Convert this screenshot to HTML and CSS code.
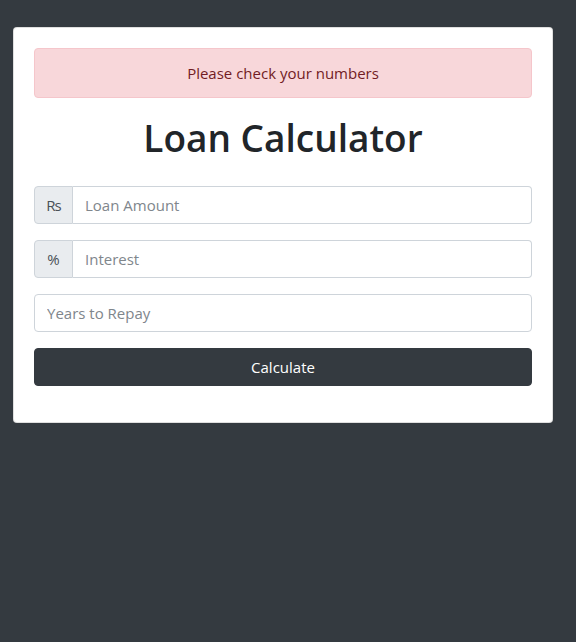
FILE: index.html
```html
<!DOCTYPE html>
<html lang="en">
<head>
<meta charset="utf-8">
<title>Loan Calculator</title>
<link rel="stylesheet" href="styles.css">
</head>
<body>
<div class="wrap">
  <div class="card">
    <div class="alert">Please check your numbers</div>
    <h1 class="title">Loan Calculator</h1>
    <form class="form" onsubmit="return false">
      <div class="group input-group">
        <span class="addon addon-rs">Rs</span>
        <input class="field" type="number" placeholder="Loan Amount">
      </div>
      <div class="group input-group">
        <span class="addon">%</span>
        <input class="field" type="number" placeholder="Interest">
      </div>
      <div class="group">
        <input class="field solo" type="number" placeholder="Years to Repay">
      </div>
      <div class="group">
        <button class="btn" type="submit">Calculate</button>
      </div>
    </form>
  </div>
</div>
</body>
</html>
```
FILE: styles.css
```css
* { box-sizing: border-box; }
html, body {
  margin: 0;
  padding: 0;
  background: #343a40;
  min-height: 100%;
}
body {
  font-family: "Open Sans", "Noto Sans", sans-serif;
  font-size: 16px;
  line-height: 1.5;
  color: #212529;
}
.wrap {
  padding: 27px 23px 0 13px;
}
.card {
  width: 540px;
  background: #fff;
  border: 1px solid rgba(0,0,0,.125);
  border-radius: 4px;
  padding: 20px;
}
.alert {
  background: #f8d7da;
  border: 1px solid #f5c6cb;
  color: #721c24;
  border-radius: 4px;
  padding: 12px 20px;
  text-align: center;
  margin-bottom: 16px;
  font-size: 15px;
  line-height: 24px;
}
.title {
  margin: 0 0 24px;
  font-size: 37px;
  font-weight: 600;
  line-height: 48px;
  text-align: center;
  color: #212529;
}
.form { margin: 0; }
.group { margin-bottom: 16px; }
.input-group { display: flex; }
.addon {
  display: flex;
  align-items: center;
  padding: 6px 12px;
  background: #e9ecef;
  border: 1px solid #ced4da;
  border-radius: 4px 0 0 4px;
  color: #495057;
  font-size: 15px;
  height: 38px;
  width: 39px;
  justify-content: center;
}
.addon-rs { letter-spacing: -1px; }
.field {
  flex: 1;
  display: block;
  width: 100%;
  height: 38px;
  padding: 6px 12px;
  font: inherit;
  font-size: 15px;
  line-height: 24px;
  color: #495057;
  background: #fff;
  border: 1px solid #ced4da;
  border-left: 0;
  border-radius: 0 4px 4px 0;
  outline: none;
}
.field.solo {
  border-left: 1px solid #ced4da;
  border-radius: 4px;
}
.field::placeholder { color: #80868c; }
.btn {
  display: block;
  width: 100%;
  height: 38px;
  background: #343a40;
  color: #fff;
  border: 1px solid #343a40;
  border-radius: 4px;
  font: inherit;
  font-size: 15px;
  line-height: 24px;
  cursor: pointer;
}
```
